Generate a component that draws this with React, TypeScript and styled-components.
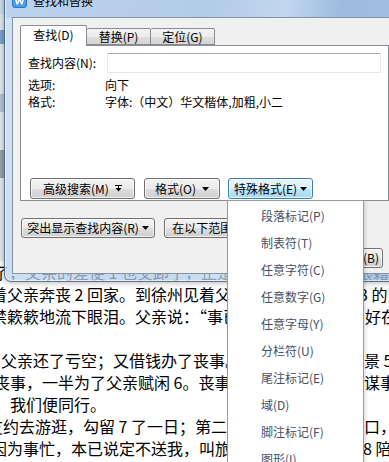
import React from "react";
import styled, { createGlobalStyle } from "styled-components";

const GlobalStyle = createGlobalStyle`
  html, body {
    margin: 0;
    padding: 0;
    background: #fff;
    overflow: hidden;
  }
  body {
    font-family: "Noto Sans CJK SC", "Noto Sans", sans-serif;
  }
`;

const UI_FONT = `"Noto Sans CJK SC", "Liberation Sans", sans-serif`;

const Screen = styled.div`
  position: relative;
  width: 389px;
  height: 462px;
  overflow: hidden;
  background: #fff;
`;

/* ---------- document window behind the dialog ---------- */

const Backdrop = styled.div`
  display: flex;
  flex-direction: column;
`;

const AppChrome = styled.div`
  height: 261px;
  background:
    linear-gradient(to bottom, #cfe0f2 0 14px, #e6ebf1 14px 30px, #7da7d3 30px 44px, #e8edf2 44px 94px,
      #b9c8da 94px 112px, #e8edf2 112px 150px, #9aa3ad 150px 178px, #e9edf1 178px) left top / 5px 100% no-repeat,
    linear-gradient(to bottom, #b7cee8 0 18px, #fff 18px);
`;

const DocLine = styled.div`
  display: flex;
  height: 22px;
  line-height: 22px;
  font-family: ${UI_FONT};
  font-size: 16px;
  color: #000;
  white-space: nowrap;
`;

const LeftPart = styled.div`
  flex: none;
  width: 227px;
  overflow: hidden;
`;

const MenuGap = styled.div`
  flex: none;
  width: 136px;
`;

const RightPart = styled.div`
  flex: 1;
  overflow: hidden;
`;

const LineText = styled.span<{ $indent: number }>`
  display: block;
  margin-left: ${(p) => p.$indent}px;
`;

/* ---------- dialog ---------- */

const Dialog = styled.div`
  position: absolute;
  left: 4px;
  top: -14px;
  width: 392px;
  padding: 0 7px 7px 7px;
  border: 1px solid rgba(52, 72, 100, 0.7);
  border-radius: 7px;
  background: linear-gradient(
    100deg,
    rgba(190, 213, 238, 0.72) 0%,
    rgba(176, 202, 231, 0.75) 45%,
    rgba(196, 218, 240, 0.75) 62%,
    rgba(150, 183, 220, 0.8) 74%,
    rgba(160, 192, 226, 0.8) 100%
  );
  box-shadow: 0 0 7px rgba(0, 0, 0, 0.35), inset 0 0 0 1px rgba(255, 255, 255, 0.55);
`;

const TitleBar = styled.div`
  display: flex;
  align-items: center;
  gap: 6px;
  height: 26px;
  padding-bottom: 4px;
  font-family: ${UI_FONT};
  font-size: 12px;
  color: #000;
`;

const Client = styled.div`
  box-sizing: border-box;
  height: 257px;
  border: 1px solid #8394aa;
  background: #f0f0f0;
  padding: 7px 14px 0 7px;
  font-family: ${UI_FONT};
  font-size: 12px;
  color: #000;
`;

const TabRow = styled.div`
  position: relative;
  z-index: 1;
  display: flex;
  align-items: flex-end;
  height: 21px;
  margin-bottom: -1px;
`;

const Tab = styled.div<{ $active?: boolean }>`
  box-sizing: border-box;
  display: flex;
  align-items: center;
  justify-content: center;
  width: ${(p) => (p.$active ? 67 : 64)}px;
  height: ${(p) => (p.$active ? 21 : 17)}px;
  margin-bottom: ${(p) => (p.$active ? 0 : 1)}px;
  border: 1px solid #898c95;
  border-bottom: ${(p) => (p.$active ? "none" : "1px solid #898c95")};
  border-left: ${(p) => (p.$active ? "1px solid #898c95" : "none")};
  border-radius: 2px 2px 0 0;
  background: ${(p) =>
    p.$active ? "#fff" : "linear-gradient(#f3f3f3 0%, #ebebeb 50%, #dedede 51%, #d4d4d4 100%)"};
  padding-bottom: ${(p) => (p.$active ? 3 : 0)}px;
  line-height: 14px;
`;

const TabPanel = styled.div`
  box-sizing: border-box;
  display: flex;
  flex-direction: column;
  height: 156px;
  border: 1px solid #898c95;
  background: #fff;
  padding: 7px 7px 1px 7px;
`;

const FieldRow = styled.div`
  display: flex;
  align-items: center;
  height: 20px;
`;

const FieldLabel = styled.div<{ $width: number }>`
  flex: none;
  width: ${(p) => p.$width}px;
  line-height: 14px;
`;

const TextInput = styled.div`
  flex: 1;
  box-sizing: border-box;
  height: 20px;
  border: 1px solid #e3e9ef;
  border-top-color: #abadb3;
  background: #fff;
`;

const InfoRow = styled.div<{ $gap: number }>`
  display: flex;
  align-items: center;
  height: 17px;
  margin-top: ${(p) => p.$gap}px;
`;

const ButtonRow = styled.div<{ $top?: number; $end?: boolean; $pad?: number }>`
  display: flex;
  align-items: center;
  margin-top: ${(p) => (p.$top === undefined ? "auto" : `${p.$top}px`)};
  justify-content: ${(p) => (p.$end ? "flex-end" : "flex-start")};
  padding-left: ${(p) => p.$pad ?? 0}px;
  padding-right: ${(p) => (p.$end ? 6 : 0)}px;
`;

const Button = styled.div<{ $width: number; $hot?: boolean; $gap?: number; $height?: number }>`
  box-sizing: border-box;
  flex: none;
  display: flex;
  align-items: center;
  justify-content: center;
  gap: 6px;
  width: ${(p) => p.$width}px;
  height: ${(p) => p.$height ?? 20}px;
  margin-left: ${(p) => p.$gap ?? 0}px;
  border: 1px solid ${(p) => (p.$hot ? "#3c7fb1" : "#707070")};
  border-radius: 3px;
  background: ${(p) =>
    p.$hot
      ? "linear-gradient(#eaf6fd 0%, #d9f0fc 50%, #bee6fd 51%, #a7d9f5 100%)"
      : "linear-gradient(#f2f2f2 0%, #ebebeb 50%, #dddddd 51%, #cfcfcf 100%)"};
  box-shadow: inset 0 0 0 1px rgba(255, 255, 255, 0.7);
  line-height: 14px;
  white-space: nowrap;
`;

const HotLabel = styled.span`
  display: flex;
  align-items: center;
  gap: 3px;
`;

/* ---------- dropdown menu ---------- */

const Menu = styled.div`
  position: absolute;
  left: 227px;
  top: 200px;
  box-sizing: border-box;
  width: 137px;
  height: 290px;
  padding-top: 1px;
  border: 1px solid #9a9a9a;
  background: #fff;
  box-shadow: 2px 2px 3px rgba(0, 0, 0, 0.12);
`;

const MenuItem = styled.div`
  height: 27px;
  line-height: 27px;
  padding-left: 33px;
  font-family: ${UI_FONT};
  font-size: 12px;
  color: #455064;
  white-space: nowrap;
`;

const WpsIcon = () => (
  <svg width="15" height="15" viewBox="0 0 15 15">
    <rect x="0.5" y="0.5" width="14" height="14" rx="2.5" fill="#4b9ce6" stroke="#2c74c4" />
    <path
      d="M3 4 L5.2 11 L7.5 6 L9.8 11 L12 4"
      fill="none"
      stroke="#fff"
      strokeWidth="1.5"
      strokeLinejoin="round"
    />
  </svg>
);

const DownArrow = () => (
  <svg width="7" height="4" viewBox="0 0 7 4">
    <path d="M0 0H7L3.5 4Z" fill="#000" />
  </svg>
);

const ExpandArrow = () => (
  <svg width="7" height="7" viewBox="0 0 7 7">
    <path d="M0 0.5H7" stroke="#000" strokeWidth="1" />
    <path d="M3.5 1V3" stroke="#000" strokeWidth="1" />
    <path d="M0.5 3H6.5L3.5 6.5Z" fill="#000" />
  </svg>
);

const docLines: { left: string; leftIndent: number; right: string; rightIndent: number }[] = [
  { left: "了，父亲的差使 1 也交卸了，正是祸不", leftIndent: -7, right: "狼藉", rightIndent: -6 },
  { left: "着父亲奔丧 2 回家。到徐州见着父亲，", leftIndent: -9, right: "3 的东西，", rightIndent: -4 },
  { left: "禁簌簌地流下眼泪。父亲说：“事已如此", leftIndent: -9, right: "好在天无绝", rightIndent: 2 },
  { left: "", leftIndent: 0, right: "", rightIndent: 0 },
  { left: "父亲还了亏空；又借钱办了丧事。这些", leftIndent: 1, right: "景 5 很是", rightIndent: 1 },
  { left: "丧事，一半为了父亲赋闲 6。丧事完毕", leftIndent: -6, right: "谋事，我也", rightIndent: 1 },
  { left: "，我们便同行。", leftIndent: -6, right: "", rightIndent: 0 },
  { left: "友约去游逛，勾留 7 了一日；第二日上午", leftIndent: -13, right: "口，下午", rightIndent: 1 },
  { left: "因为事忙，本已说定不送我，叫旅馆里", leftIndent: -9, right: " 8 陪我", rightIndent: 0 },
];

const menuItems = [
  "段落标记(P)",
  "制表符(T)",
  "任意字符(C)",
  "任意数字(G)",
  "任意字母(Y)",
  "分栏符(U)",
  "尾注标记(E)",
  "域(D)",
  "脚注标记(F)",
  "图形(I)",
];

export default function App() {
  return (
    <>
      <GlobalStyle />
      <Screen>
        <Backdrop>
          <AppChrome />
          {docLines.map((line, i) => (
            <DocLine key={i}>
              <LeftPart>
                <LineText $indent={line.leftIndent}>{line.left}</LineText>
              </LeftPart>
              <MenuGap />
              <RightPart>
                <LineText $indent={line.rightIndent}>{line.right}</LineText>
              </RightPart>
            </DocLine>
          ))}
        </Backdrop>

        <Dialog>
          <TitleBar>
            <WpsIcon />
            <span>查找和替换</span>
          </TitleBar>
          <Client>
            <TabRow>
              <Tab $active>查找(D)</Tab>
              <Tab>替换(P)</Tab>
              <Tab>定位(G)</Tab>
            </TabRow>
            <TabPanel>
              <FieldRow>
                <FieldLabel $width={79}>查找内容(N):</FieldLabel>
                <TextInput />
              </FieldRow>
              <InfoRow $gap={3}>
                <FieldLabel $width={77}>选项:</FieldLabel>
                <span>向下</span>
              </InfoRow>
              <InfoRow $gap={0}>
                <FieldLabel $width={77}>格式:</FieldLabel>
                <span>字体:（中文）华文楷体,加粗,小二</span>
              </InfoRow>
              <ButtonRow $pad={2}>
                <Button $width={105} $height={21}>
                  高级搜索(M)
                  <ExpandArrow />
                </Button>
                <Button $width={76} $gap={9} $height={21}>
                  格式(O)
                  <DownArrow />
                </Button>
                <Button $width={85} $gap={8} $height={21} $hot>
                  <HotLabel>
                    特殊格式(E)
                    <DownArrow />
                  </HotLabel>
                </Button>
              </ButtonRow>
            </TabPanel>
            <ButtonRow $top={17} $pad={1}>
              <Button $width={134}>
                <HotLabel>
                  突出显示查找内容(R)
                  <DownArrow />
                </HotLabel>
              </Button>
              <Button $width={134} $gap={9}>
                <HotLabel>
                  在以下范围中查找(I)
                  <DownArrow />
                </HotLabel>
              </Button>
            </ButtonRow>
            <ButtonRow $top={10} $end>
              <Button $width={84}>查找上一处(B)</Button>
            </ButtonRow>
          </Client>
        </Dialog>

        <Menu>
          {menuItems.map((item) => (
            <MenuItem key={item}>{item}</MenuItem>
          ))}
        </Menu>
      </Screen>
    </>
  );
}
